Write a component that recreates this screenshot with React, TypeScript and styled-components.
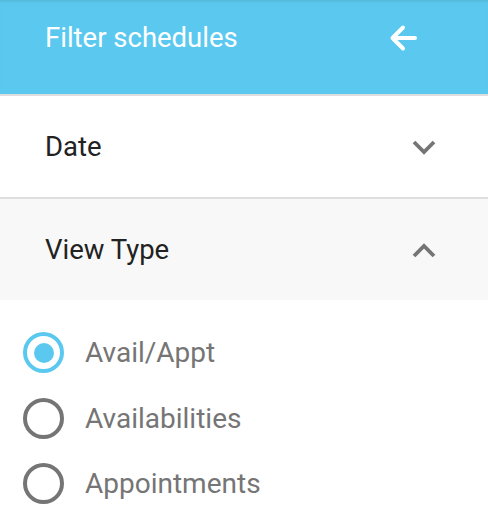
import React, { useState } from 'react';
import styled, { createGlobalStyle } from 'styled-components';

const GlobalStyle = createGlobalStyle`
    body { margin: 0; background: #fff; font-family: Roboto, "Noto Sans", sans-serif; }
`;

const Panel = styled.div`
    width: 488px;
    height: 530px;
    background: #fff;
    overflow: hidden;
`;

const Header = styled.header`
    height: 96px;
    box-sizing: border-box;
    padding: 20px 0 0 45px;
    display: flex;
    align-items: flex-start;
    justify-content: space-between;
    background: #5bc9ef;
    box-shadow: inset 0 3px 2px -1px rgba(0, 0, 0, 0.08);
    border-bottom: 2px solid #dedede;
`;

const Title = styled.h1`
    margin: 0;
    font-size: 27.5px;
    line-height: 36px;
    font-weight: 400;
    color: #fff;
`;

const BackButton = styled.button`
    width: 40px;
    height: 40px;
    margin: -2px 64px 0 0;
    padding: 0;
    border: none;
    background: transparent;
    display: flex;
    align-items: center;
    justify-content: center;
`;

const Section = styled.div<{ $open?: boolean }>`
    height: ${p => (p.$open ? '101px' : '103px')};
    box-sizing: border-box;
    padding: 0 51px 0 45px;
    display: flex;
    align-items: center;
    justify-content: space-between;
    background: ${p => (p.$open ? '#f8f8f8' : '#fff')};
    border-bottom: ${p => (p.$open ? 'none' : '2px solid #dedede')};
`;

const SectionLabel = styled.span`
    font-size: 27.5px;
    color: #222;
`;

const RadioList = styled.div`
    padding: 20px 0 0 23px;
    display: flex;
    flex-direction: column;
`;

const RadioRow = styled.label`
    height: 65.5px;
    display: flex;
    align-items: center;
    gap: 21px;
    cursor: pointer;
`;

const RadioCircle = styled.span<{ $checked: boolean }>`
    width: 41px;
    height: 41px;
    flex-shrink: 0;
    box-sizing: border-box;
    border-radius: 50%;
    border: 4px solid ${p => (p.$checked ? '#5bc9ef' : '#757575')};
    display: flex;
    align-items: center;
    justify-content: center;
    &::after {
        content: "";
        width: 20px;
        height: 20px;
        border-radius: 50%;
        background: #5bc9ef;
        display: ${p => (p.$checked ? 'block' : 'none')};
    }
`;

const RadioText = styled.span`
    font-size: 28px;
    color: #757575;
`;

const Chevron = ({ up }: { up?: boolean }) => (
    <svg width="26" height="18" viewBox="0 0 26 18" fill="none">
        <polyline
            points={up ? '3,15 13,5 23,15' : '3,4 13,14 23,4'}
            stroke="#757575"
            strokeWidth={3.8}
        />
    </svg>
);

const options = ['Avail/Appt', 'Availabilities', 'Appointments'];

export default function App() {
    const [selected, setSelected] = useState(0);
    return (
        <Panel>
            <GlobalStyle />
            <Header>
                <Title>Filter schedules</Title>
                <BackButton aria-label="Back">
                    <svg width="32" height="32" viewBox="0 0 32 32" fill="none">
                        <path d="M27 16H5M15 5.5L4.5 16 15 26.5" stroke="#fff" strokeWidth={4} strokeLinecap="round" strokeLinejoin="round" />
                    </svg>
                </BackButton>
            </Header>
            <Section>
                <SectionLabel>Date</SectionLabel>
                <Chevron />
            </Section>
            <Section $open>
                <SectionLabel>View Type</SectionLabel>
                <Chevron up />
            </Section>
            <RadioList>
                {options.map((o, i) => (
                    <RadioRow key={o} onClick={() => setSelected(i)}>
                        <RadioCircle $checked={selected === i} />
                        <RadioText>{o}</RadioText>
                    </RadioRow>
                ))}
            </RadioList>
        </Panel>
    );
}
